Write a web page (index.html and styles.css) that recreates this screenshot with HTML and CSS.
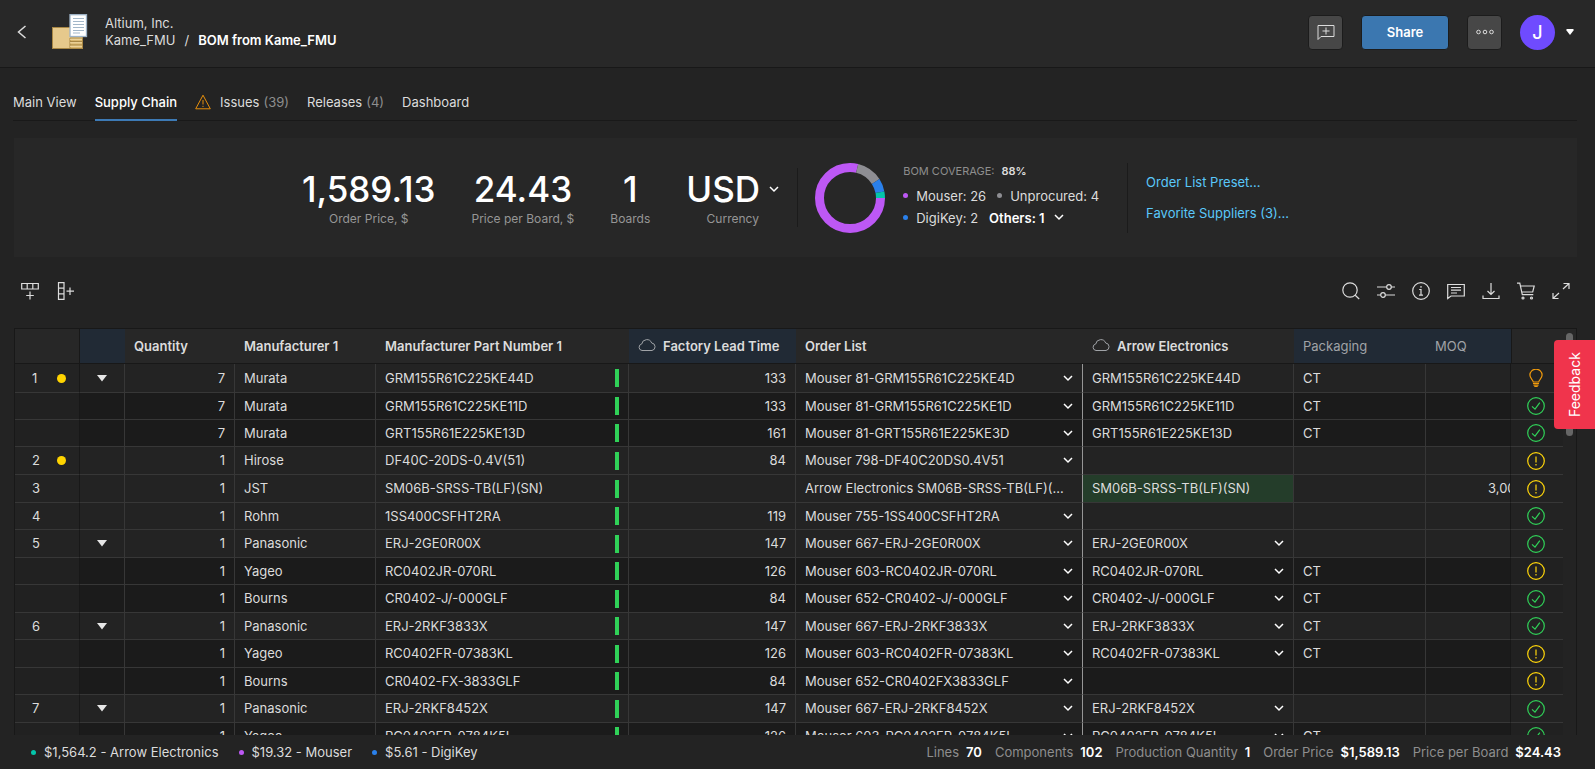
FILE: index.html
```html
<!DOCTYPE html>
<html lang="en">
<head>
<meta charset="utf-8">
<title>BOM from Kame_FMU</title>
<link rel="stylesheet" href="styles.css">
</head>
<body>
<svg class="sprite" aria-hidden="true">
  <symbol id="ok" viewBox="0 0 18 18"><circle cx="9" cy="9" r="8.3"/><path d="M5 9.4 8 12.2 12.8 5.6"/></symbol>
  <symbol id="warn" viewBox="0 0 18 18"><circle cx="9" cy="9" r="8.3"/><path d="M9 4.5v6M9 12v1.4"/></symbol>
  <symbol id="bulb" viewBox="0 0 18 18"><path d="M6.300 13C6 10.600 2.900 9.500 2.900 6.100a6.100 5.900 0 0 1 12.200 0c0 3.400-3.100 4.500-3.400 6.900Z"/><path d="M6 14.500h6M6.500 16.200h5M7.300 17.500h3.400"/></symbol>
  <symbol id="tri" viewBox="0 0 10 7"><path d="M0 0h10L5 6.500Z"/></symbol>
  <symbol id="cloud" viewBox="0 0 18 14"><path d="M4 12.500a3.300 3.300 0 0 1-.3-6.500A5.200 5.200 0 0 1 13.700 5a3.800 3.800 0 0 1 .3 7.500Z"/></symbol>
</svg>

<header class="topbar">
  <button class="back" aria-label="Back"><svg width="10" height="14" viewBox="0 0 10 14"><path d="M8.500 1 1.500 7l7 6"/></svg></button>
  <svg class="doc-icon" width="36" height="36" viewBox="0 0 36 36" aria-hidden="true">
    <rect x=".5" y="13.500" width="30" height="21" fill="#e6c98c" stroke="#a88745"/>
    <path d="M18 24h12.500v10.500H18z" fill="#d8b66e" stroke="#a88745"/>
    <path d="M18 27.500h12.500M18 31h12.500" stroke="#a88745"/>
    <path d="M18 25.300h12M18 28.800h12M18 32.300h12" stroke="#f0d9a4"/>
    <rect x="18" y=".7" width="16.500" height="21.800" fill="#fff" stroke="#9fb4c8" stroke-width="1.300"/>
    <path d="M21 4.500h11M21 7.500h11M21 10.500h11M21 13.500h11M21 16.500h11M21 19h7" stroke="#a3b7c9" stroke-width="1.200"/>
  </svg>
  <nav class="crumbs" aria-label="Breadcrumb">
    <a href="#">Altium, Inc.</a>
    <div class="crumb-line"><a href="#">Kame_FMU</a><span>/</span><strong>BOM from Kame_FMU</strong></div>
  </nav>
  <div class="actions">
    <button class="square" aria-label="Add comment"><svg width="18" height="18" viewBox="0 0 18 18"><path d="M1 16.500V2.500h16v11H4ZM9 4.500v7M5.500 8h7"/></svg></button>
    <button class="share">Share</button>
    <button class="square" aria-label="More"><svg width="18" height="6" viewBox="0 0 18 6"><circle cx="2.500" cy="3" r="1.800"/><circle cx="9" cy="3" r="1.800"/><circle cx="15.500" cy="3" r="1.800"/></svg></button>
    <button class="user" aria-label="Account"><span class="avatar">J</span><svg width="8" height="6" viewBox="0 0 8 6"><path d="M.5 0h7v1.500L4 6 .5 1.500Z"/></svg></button>
  </div>
</header>

<main class="page">
  <nav class="tabs" aria-label="Views">
    <a href="#">Main View</a>
    <a href="#" class="active" aria-current="page">Supply Chain</a>
    <a href="#"><svg class="tab-warn" width="16" height="16" viewBox="0 0 16 16"><path d="M8 1.200 15.300 14.800H.7ZM8 6v4.500M8 11.800v1.200"/></svg>Issues <span class="muted">(39)</span></a>
    <a href="#">Releases <span class="muted">(4)</span></a>
    <a href="#">Dashboard</a>
  </nav>

  <section class="summary">
    <div class="metrics">
      <div class="metric"><div class="value">1,589.13</div><div class="label">Order Price, $</div></div>
      <div class="metric"><div class="value">24.43</div><div class="label">Price per Board, $</div></div>
      <div class="metric"><div class="value">1</div><div class="label">Boards</div></div>
      <div class="metric"><select class="value currency" id="currency"><option>USD</option></select><label class="label" for="currency">Currency</label></div>
    </div>
    <div class="coverage">
      <svg width="70" height="70" viewBox="0 0 70 70" class="donut" role="img" aria-label="BOM coverage">
        <circle cx="35" cy="35" r="30.500" stroke="#bd58f5" pathLength="33" stroke-dasharray="26 33"/>
        <circle cx="35" cy="35" r="30.500" stroke="#8e8e93" pathLength="33" stroke-dasharray="4 33" stroke-dashoffset="-26"/>
        <circle cx="35" cy="35" r="30.500" stroke="#2a80eb" pathLength="33" stroke-dasharray="2 33" stroke-dashoffset="-30"/>
        <circle cx="35" cy="35" r="30.500" stroke="#04c5aa" pathLength="33" stroke-dasharray="1 33" stroke-dashoffset="-32"/>
      </svg>
      <div class="legend">
        <div class="legend-title">BOM COVERAGE: <b>88%</b></div>
        <div class="legend-row"><span><i class="dot purple"></i>Mouser: 26</span><span><i class="dot grey"></i>Unprocured: 4</span></div>
        <div class="legend-row"><span><i class="dot blue"></i>DigiKey: 2</span><button class="others">Others: 1<svg width="10" height="7" viewBox="0 0 10 7"><path d="m1 1 4 4 4-4"/></svg></button></div>
      </div>
    </div>
    <div class="links">
      <a href="#">Order List Preset...</a>
      <a href="#">Favorite Suppliers (3)...</a>
    </div>
  </section>

  <div class="toolbar">
    <button aria-label="Add row"><svg viewBox="0 0 18 18"><path d="M.7 1.500h16.600v5.500H.7ZM6.200 1.500V7M11.800 1.500V7M9 9.500v8M5.200 13.500h7.600"/></svg></button>
    <button aria-label="Add column"><svg viewBox="0 0 18 18"><path d="M1.500.7h5.500v16.600H1.500ZM1.500 6.200H7M1.500 11.800H7M13 5.500v7.500M9.500 9.200h7.500"/></svg></button>
    <div class="tools">
      <button aria-label="Search"><svg viewBox="0 0 18 18"><circle cx="8" cy="8" r="7.200"/><path d="m13.200 13.200 4 3.800"/></svg></button>
      <button aria-label="Filter settings"><svg viewBox="0 0 18 18"><circle cx="12" cy="5" r="2.300"/><circle cx="6" cy="13" r="2.300"/><path d="M0 5h9.700M14.300 5H18M0 13h3.700M8.300 13H18"/></svg></button>
      <button aria-label="Information"><svg viewBox="0 0 18 18"><circle cx="9" cy="9" r="8.300"/><path d="M7.200 7.500H9v5.300M7 13.200h4M9 4v1.700"/></svg></button>
      <button aria-label="Comments"><svg viewBox="0 0 18 18"><path d="M.7 16.500V2.500h16.600v11.500H4ZM4 5.500h10M4 8.200h10M4 11h6"/></svg></button>
      <button aria-label="Download"><svg viewBox="0 0 18 18"><path d="M9 1v11.500M5.500 9 9 12.500 12.500 9M1 13.500v3h16v-3"/></svg></button>
      <button aria-label="Cart"><svg viewBox="0 0 18 18"><path d="M0 1.200h2.800l2.500 11.500h11M3.500 4h13.700l-1.500 6H5"/><circle cx="6" cy="16" r="1"/><circle cx="14.500" cy="16" r="1"/></svg></button>
      <button aria-label="Expand"><svg viewBox="0 0 18 18"><path d="M11 7l6-5.500M11.500 1.500H17V7M7 11l-6 5.500M1 11v5.500h5.500"/></svg></button>
    </div>
  </div>

  <div class="grid">
    <table>
      <colgroup><col class="c-num"><col class="c-tree"><col class="c-qty"><col class="c-man"><col class="c-mpn"><col class="c-flt"><col><col class="c-arrow"><col class="c-pack"><col class="c-moq"><col class="c-status"></colgroup>
      <thead>
        <tr><th class="num"></th><th class="tint"></th><th>Quantity</th><th>Manufacturer 1</th><th>Manufacturer Part Number 1</th><th class="tint"><svg class="cloud"><use href="#cloud"/></svg>Factory Lead Time</th><th>Order List</th><th><svg class="cloud"><use href="#cloud"/></svg>Arrow Electronics</th><th class="tint dim">Packaging</th><th class="tint dim">MOQ</th><th class="status"></th></tr>
      </thead>
      <tbody>
        <tr><td class="num">1<i class="mark"></i></td><td class="tree"><button aria-label="Collapse"><svg><use href="#tri"/></svg></button></td><td class="right">7</td><td>Murata</td><td class="bar">GRM155R61C225KE44D</td><td class="right">133</td><td class="order"><select aria-label="Order list"><option>Mouser 81-GRM155R61C225KE4D</option></select></td><td class="arrow">GRM155R61C225KE44D</td><td class="pack">CT</td><td></td><td class="status idea"><svg><use href="#bulb"/></svg></td></tr>
        <tr class="sub"><td class="num"></td><td></td><td class="right">7</td><td>Murata</td><td class="bar">GRM155R61C225KE11D</td><td class="right">133</td><td class="order"><select aria-label="Order list"><option>Mouser 81-GRM155R61C225KE1D</option></select></td><td class="arrow">GRM155R61C225KE11D</td><td class="pack">CT</td><td></td><td class="status good"><svg><use href="#ok"/></svg></td></tr>
        <tr class="sub"><td class="num"></td><td></td><td class="right">7</td><td>Murata</td><td class="bar">GRT155R61E225KE13D</td><td class="right">161</td><td class="order"><select aria-label="Order list"><option>Mouser 81-GRT155R61E225KE3D</option></select></td><td class="arrow">GRT155R61E225KE13D</td><td class="pack">CT</td><td></td><td class="status good"><svg><use href="#ok"/></svg></td></tr>
        <tr><td class="num">2<i class="mark"></i></td><td></td><td class="right">1</td><td>Hirose</td><td class="bar">DF40C-20DS-0.4V(51)</td><td class="right">84</td><td class="order"><select aria-label="Order list"><option>Mouser 798-DF40C20DS0.4V51</option></select></td><td class="arrow"></td><td class="pack"></td><td></td><td class="status caution"><svg><use href="#warn"/></svg></td></tr>
        <tr><td class="num">3</td><td></td><td class="right">1</td><td>JST</td><td class="bar">SM06B-SRSS-TB(LF)(SN)</td><td class="right"></td><td class="order long">Arrow Electronics SM06B-SRSS-TB(LF)(SN)</td><td class="arrow chosen">SM06B-SRSS-TB(LF)(SN)</td><td class="pack"></td><td class="moq">3,000</td><td class="status caution"><svg><use href="#warn"/></svg></td></tr>
        <tr><td class="num">4</td><td></td><td class="right">1</td><td>Rohm</td><td class="bar">1SS400CSFHT2RA</td><td class="right">119</td><td class="order"><select aria-label="Order list"><option>Mouser 755-1SS400CSFHT2RA</option></select></td><td class="arrow"></td><td class="pack"></td><td></td><td class="status good"><svg><use href="#ok"/></svg></td></tr>
        <tr><td class="num">5</td><td class="tree"><button aria-label="Collapse"><svg><use href="#tri"/></svg></button></td><td class="right">1</td><td>Panasonic</td><td class="bar">ERJ-2GE0R00X</td><td class="right">147</td><td class="order"><select aria-label="Order list"><option>Mouser 667-ERJ-2GE0R00X</option></select></td><td class="arrow"><select aria-label="Arrow part"><option>ERJ-2GE0R00X</option></select></td><td class="pack"></td><td></td><td class="status good"><svg><use href="#ok"/></svg></td></tr>
        <tr class="sub"><td class="num"></td><td></td><td class="right">1</td><td>Yageo</td><td class="bar">RC0402JR-070RL</td><td class="right">126</td><td class="order"><select aria-label="Order list"><option>Mouser 603-RC0402JR-070RL</option></select></td><td class="arrow"><select aria-label="Arrow part"><option>RC0402JR-070RL</option></select></td><td class="pack">CT</td><td></td><td class="status caution"><svg><use href="#warn"/></svg></td></tr>
        <tr class="sub"><td class="num"></td><td></td><td class="right">1</td><td>Bourns</td><td class="bar">CR0402-J/-000GLF</td><td class="right">84</td><td class="order"><select aria-label="Order list"><option>Mouser 652-CR0402-J/-000GLF</option></select></td><td class="arrow"><select aria-label="Arrow part"><option>CR0402-J/-000GLF</option></select></td><td class="pack">CT</td><td></td><td class="status good"><svg><use href="#ok"/></svg></td></tr>
        <tr><td class="num">6</td><td class="tree"><button aria-label="Collapse"><svg><use href="#tri"/></svg></button></td><td class="right">1</td><td>Panasonic</td><td class="bar">ERJ-2RKF3833X</td><td class="right">147</td><td class="order"><select aria-label="Order list"><option>Mouser 667-ERJ-2RKF3833X</option></select></td><td class="arrow"><select aria-label="Arrow part"><option>ERJ-2RKF3833X</option></select></td><td class="pack">CT</td><td></td><td class="status good"><svg><use href="#ok"/></svg></td></tr>
        <tr class="sub"><td class="num"></td><td></td><td class="right">1</td><td>Yageo</td><td class="bar">RC0402FR-07383KL</td><td class="right">126</td><td class="order"><select aria-label="Order list"><option>Mouser 603-RC0402FR-07383KL</option></select></td><td class="arrow"><select aria-label="Arrow part"><option>RC0402FR-07383KL</option></select></td><td class="pack">CT</td><td></td><td class="status caution"><svg><use href="#warn"/></svg></td></tr>
        <tr class="sub"><td class="num"></td><td></td><td class="right">1</td><td>Bourns</td><td class="bar">CR0402-FX-3833GLF</td><td class="right">84</td><td class="order"><select aria-label="Order list"><option>Mouser 652-CR0402FX3833GLF</option></select></td><td class="arrow"></td><td class="pack"></td><td></td><td class="status caution"><svg><use href="#warn"/></svg></td></tr>
        <tr><td class="num">7</td><td class="tree"><button aria-label="Collapse"><svg><use href="#tri"/></svg></button></td><td class="right">1</td><td>Panasonic</td><td class="bar">ERJ-2RKF8452X</td><td class="right">147</td><td class="order"><select aria-label="Order list"><option>Mouser 667-ERJ-2RKF8452X</option></select></td><td class="arrow"><select aria-label="Arrow part"><option>ERJ-2RKF8452X</option></select></td><td class="pack"></td><td></td><td class="status good"><svg><use href="#ok"/></svg></td></tr>
        <tr class="sub"><td class="num"></td><td></td><td class="right">1</td><td>Yageo</td><td class="bar">RC0402FR-0784K5L</td><td class="right">126</td><td class="order"><select aria-label="Order list"><option>Mouser 603-RC0402FR-0784K5L</option></select></td><td class="arrow"><select aria-label="Arrow part"><option>RC0402FR-0784K5L</option></select></td><td class="pack">CT</td><td></td><td class="status good"><svg><use href="#ok"/></svg></td></tr>
      </tbody>
    </table>
    <div class="gutter"><div class="thumb"></div></div>
  </div>
</main>

<footer class="statusbar">
  <span><i class="dot teal"></i>$1,564.2 - Arrow Electronics</span>
  <span><i class="dot purple"></i>$19.32 - Mouser</span>
  <span><i class="dot blue"></i>$5.61 - DigiKey</span>
  <div class="totals"><span>Lines <b>70</b></span><span>Components <b>102</b></span><span>Production Quantity <b>1</b></span><span>Order Price <b>$1,589.13</b></span><span>Price per Board <b>$24.43</b></span></div>
</footer>

<button class="feedback">Feedback</button>
</body>
</html>
```
FILE: styles.css
```css
* { box-sizing: border-box; }

body {
  margin: 0;
  height: 100vh;
  display: flex;
  flex-direction: column;
  overflow: hidden;
  background: #232323;
  color: #dcdcdc;
  font: 13px/17px Inter, "Liberation Sans", sans-serif;
}

a { color: inherit; text-decoration: none; }
b, strong { font-weight: 600; color: #fff; }
button { padding: 0; border: 0; background: none; color: inherit; font: inherit; }
select { appearance: none; border: 0; border-radius: 0; color: inherit; font: inherit; }
svg { display: block; flex: none; fill: none; stroke: currentColor; }
.sprite { position: absolute; width: 0; height: 0; }
.muted { color: #8e8e8e; }

/* Top bar */
.topbar {
  display: flex;
  align-items: center;
  height: 68px;
  flex: none;
  padding: 0 21px 3px 17px;
  background: #282828;
  border-bottom: 1px solid #181818;
}
.back svg { stroke-width: 1.5; }
.doc-icon { margin-left: 25px; }
.crumbs { margin-left: 17px; }
.crumb-line { display: flex; gap: 9px; }
.actions { display: flex; align-items: center; gap: 18px; margin-left: auto; }
.square { display: grid; place-items: center; width: 35px; height: 35px; border: 1px solid #1c1c1c; border-radius: 4px; background: #474747; }
.share { width: 88px; height: 35px; border: 1px solid #1c1c1c; border-radius: 4px; background: #3b77b0; color: #fff; font-weight: 600; }
.user { display: flex; align-items: center; gap: 11px; }
.user svg { fill: #fff; stroke: none; }
.avatar { width: 35px; height: 35px; border-radius: 50%; background: #6f4bff; color: #fff; font-size: 18px; line-height: 35px; font-weight: 500; }

/* Page */
.page { flex: 1; min-height: 0; display: flex; flex-direction: column; padding: 0 18px 0 14px; }
.tabs { display: flex; gap: 18px; flex: none; height: 53px; margin-left: -1px; border-bottom: 1px solid #191919; }
.tabs a { display: flex; gap: 4px; align-items: center; height: 53px; padding-top: 15px; }
.tabs .active { color: #fff; font-weight: 500; border-bottom: 2px solid #3d7ab5; padding-top: 17px; }
.tab-warn { margin-right: 5px; color: #e8900c; }

.summary {
  display: flex;
  flex: none;
  justify-content: center;
  align-items: center;
  height: 119px;
  margin-top: 17px;
  background: #272727;
}
.metrics { display: flex; gap: 36px; padding-right: 18px; border-right: 1px solid #1b1b1b; }
.metric { display: flex; flex-direction: column; align-items: center; }
.value { color: #fff; font-size: 35px; line-height: 42px; font-weight: 500; }
.currency {
  padding: 0 19px 0 0;
  height: 42px;
  background: url("data:image/svg+xml,%3Csvg xmlns='http://www.w3.org/2000/svg' width='10' height='7' fill='none' stroke='white' stroke-width='1.500'%3E%3Cpath d='m1 1 4 4 4-4'/%3E%3C/svg%3E") no-repeat right center;
}
.label { color: #969696; font-size: 12px; }
.coverage { display: flex; align-items: center; gap: 18px; padding: 0 28px 0 17px; border-right: 1px solid #1b1b1b; }
.donut { stroke-width: 9; }
.legend { padding-bottom: 4px; }
.legend-title { color: #8e8e8e; font-size: 11px; margin-bottom: 5px; }
.legend-title b { margin-left: 4px; color: #dcdcdc; }
.legend-row { display: flex; gap: 11px; line-height: 22px; }
.legend-row span, .statusbar span { display: flex; align-items: center; }
.dot { width: 5px; height: 5px; border-radius: 50%; margin-right: 8px; }
.purple { background: #bd58f5; }
.grey { background: #8e8e93; }
.blue { background: #2a80eb; }
.teal { background: #04c5aa; }
.others { display: flex; align-items: center; gap: 9px; color: #fff; font-weight: 600; }
.others svg { stroke-width: 1.5; }
.links { display: flex; flex-direction: column; gap: 14px; padding-left: 18px; color: #5ac8fa; }

/* Toolbar */
.toolbar { display: flex; flex: none; align-items: center; gap: 18px; height: 71px; padding: 0 7px 3px 7px; }
.toolbar svg { width: 18px; height: 18px; stroke-width: 1.2; }
.tools { display: flex; gap: 17px; margin-left: auto; }

/* Parts table */
.grid { flex: 1; min-height: 0; display: flex; align-items: flex-start; overflow: hidden; border: 1px solid #181818; border-bottom: 0; }
table { flex: 1; width: 0; table-layout: fixed; border-collapse: separate; border-spacing: 0; }
.c-num { width: 65px; }
.c-tree { width: 45px; }
.c-qty { width: 110px; }
.c-man { width: 141px; }
.c-mpn { width: 253px; }
.c-flt { width: 167px; }
.c-arrow { width: 211px; }
.c-pack { width: 132px; }
.c-moq { width: 85px; }
.c-status { width: 52px; }

th, td { padding: 0 9px; overflow: hidden; white-space: nowrap; text-align: left; vertical-align: middle; }
th { height: 35px; background: #272727; border-bottom: 1px solid #181818; font-weight: 600; }
.tint { background: #212a35; }
.dim { color: #a0a3a7; font-weight: 400; }
.cloud { display: inline-block; width: 18px; height: 14px; margin-right: 7px; vertical-align: -1px; color: #a0a3a7; }

td { height: 27px; border-bottom: 1px solid #373737; border-right: 1px solid #373737; background: #232323; }
tr:nth-child(odd) td { height: 28px; }
tbody tr:first-child td { height: 29px; }
tbody tr:nth-child(3) td { height: 27px; }
tbody tr:nth-child(4) td { height: 28px; }
.sub td { background: #1b1b1b; }
.sub .num, .sub .status { background: #212121; }
.num { padding-left: 17px; border-right: 1px solid #181818; }
.mark { float: right; width: 9px; height: 9px; margin: 4px 4px 0 0; border-radius: 50%; background: #ffd400; }
.tree button { display: block; margin: 0 auto; }
.tree svg { width: 10px; height: 7px; fill: #e6e6e6; stroke: none; }
.right { text-align: right; }
td.bar { background: #232323 linear-gradient(#30d158, #30d158) right 9px center / 4px 18px no-repeat; }
tr.sub td.bar { background-color: #1b1b1b; }
.order { border-right-color: #969696; }
.long { padding-right: 10px; text-overflow: ellipsis; }
td select {
  display: block;
  width: 100%;
  padding: 0;
  background: url("data:image/svg+xml,%3Csvg xmlns='http://www.w3.org/2000/svg' width='10' height='7' fill='none' stroke='white' stroke-width='1.500'%3E%3Cpath d='m1 1 4 4 4-4'/%3E%3C/svg%3E") no-repeat right center;
}
td.chosen { background: #243d2a; }
.moq { padding: 0 0 0 62px; }
td:nth-last-child(2) { border-right-color: #181818; }
.status { border-right: 0; padding: 0 0 0 16px; }
th.status { border-left: 1px solid #181818; }
.status svg { width: 18px; height: 18px; stroke-width: 1.2; }
.good { color: #30d158; }
.caution { color: #ffd60a; }
.idea { color: #f09a0c; }
.gutter { flex: none; width: 13px; height: 35px; background: #272727; border-bottom: 1px solid #181818; }
.thumb { width: 7px; height: 103px; margin: 4px 0 0 3px; border-radius: 4px; background: #666; }

/* Status bar */
.statusbar { display: flex; flex: none; align-items: center; gap: 20px; height: 34px; padding: 0 34px 0 31px; }
.totals { display: flex; gap: 13px; margin-left: auto; color: #8e8e8e; }
.totals b { margin-left: 7px; }

.feedback {
  position: absolute;
  right: 0;
  top: 340px;
  width: 41px;
  height: 89px;
  border-radius: 0 4px 4px 0;
  background: #f0344c;
  color: #fff;
  font-size: 14px;
  writing-mode: vertical-rl;
  transform: rotate(180deg);
}
```
